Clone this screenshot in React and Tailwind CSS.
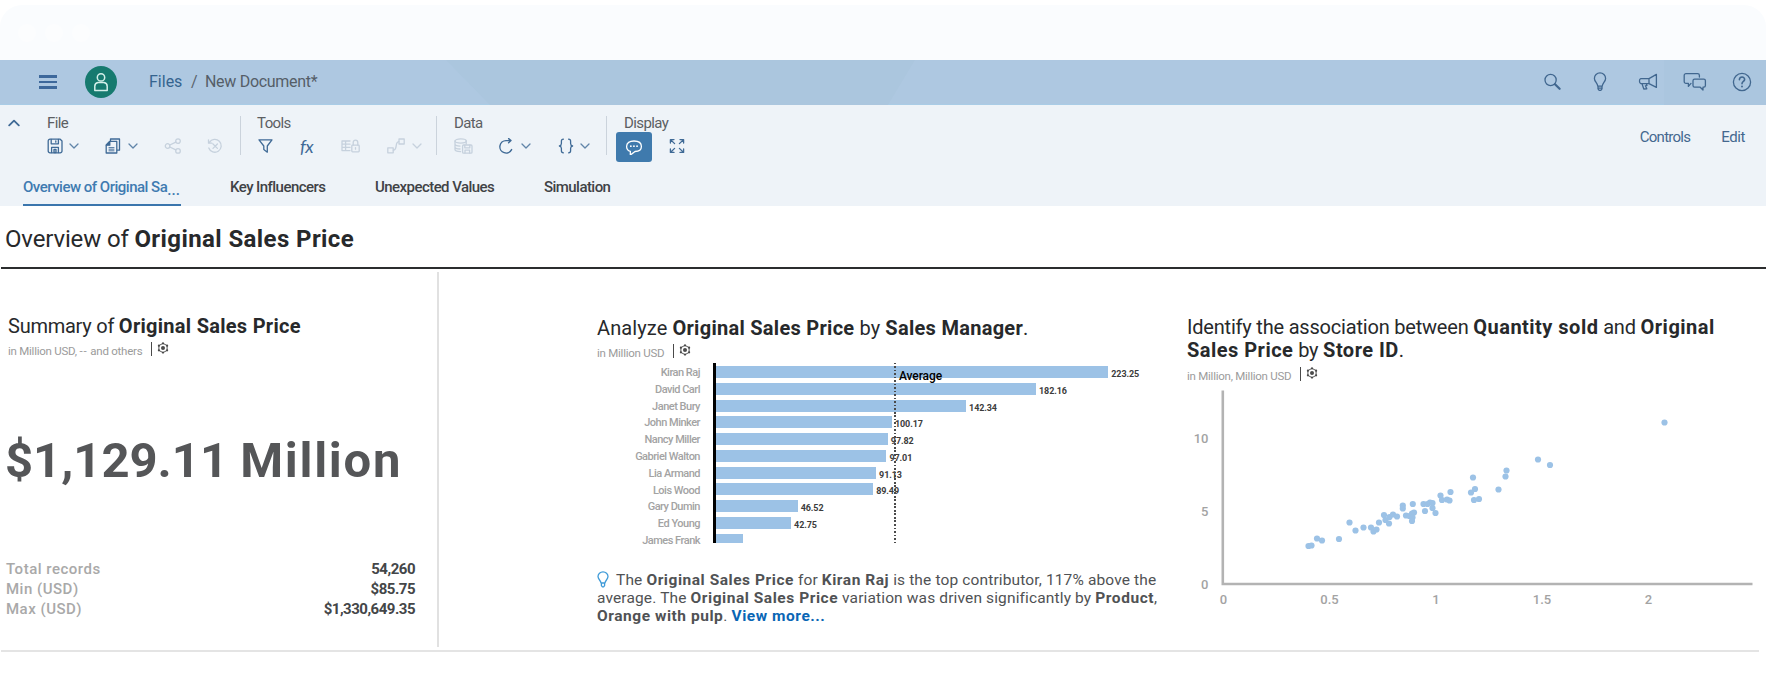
function Svg({ w = 16, h = 16, className = "", children }) {
  return (
    <svg
      width={w}
      height={h}
      viewBox={`0 0 ${w} ${h}`}
      fill="none"
      stroke="currentColor"
      strokeWidth="1.3"
      strokeLinecap="round"
      strokeLinejoin="round"
      className={`shrink-0 ${className}`}
    >
      {children}
    </svg>
  );
}

function Chevron({ className = "" }) {
  return (
    <Svg w={10} h={6} className={className}>
      <path d="M1 1l4 4 4-4" />
    </Svg>
  );
}

function SaveIcon() {
  return (
    <Svg>
      <path d="M3 1.2h10.2L15 3v10a1.8 1.8 0 0 1-1.8 1.8H3A1.8 1.8 0 0 1 1.2 13V3A1.8 1.8 0 0 1 3 1.2z" />
      <path d="M4.2 1.4v4.4h7.2V1.4M8.8 2.8v1.4M4.6 14.6V9.4h6.8v5.2M7 11.5v3h2v-3z" />
    </Svg>
  );
}

function CopyIcon() {
  return (
    <Svg className="ml-[26px]">
      <path d="M5.5 2.8V1h9v11.2h-2.2" />
      <path d="M4.6 3.4h7.2V15H1.2V7z" />
      <path d="M4.8 3.6v3.6H1.4z" fill="currentColor" />
      <path d="M4 9.6h5M4 11.2h5M4 12.8h5" strokeWidth="0.9" />
    </Svg>
  );
}

function ShareIcon() {
  return (
    <Svg w={18} className="ml-[26px]">
      <circle cx="3.6" cy="8" r="2.3" />
      <circle cx="14" cy="3.1" r="2.3" />
      <circle cx="14" cy="12.9" r="2.3" />
      <path d="M5.8 7l6-2.9M5.8 9l6 2.9" />
    </Svg>
  );
}

function ResetIcon() {
  return (
    <Svg className="ml-[25px]">
      <path d="M2.4 4.4A6.4 6.4 0 1 1 1.8 10M1.5 1.8v3.4h3.4M6 6l4.4 4.4M10.4 6L6 10.4" />
    </Svg>
  );
}

function FilterIcon() {
  return (
    <Svg w={15} className="ml-px">
      <path d="M1 1.8h13L9.3 8v6.2L5.8 11.6V8z" />
    </Svg>
  );
}

function LockedTableIcon() {
  return (
    <Svg w={19} className="ml-[26px]">
      <path d="M9 3H1v9.6h8M1 6.2h8M1 9.4h8M4.6 3v9.6" />
      <rect x="10.8" y="7.2" width="7.4" height="6.6" rx="0.8" />
      <path d="M12.2 7V4.4a2.3 2.3 0 0 1 4.6 0V7M14.5 9.6v1.6" />
    </Svg>
  );
}

function LinkedIcon() {
  return (
    <Svg w={18} className="ml-[27px]">
      <rect x="0.8" y="9.8" width="5.4" height="5" />
      <rect x="12" y="1" width="5.2" height="5" />
      <path d="M6.4 12.2c4.6-.4 1-8.2 5.4-8.6" />
    </Svg>
  );
}

function DataSaveIcon() {
  return (
    <Svg w={19}>
      <ellipse cx="6.6" cy="3" rx="5.6" ry="2.1" />
      <path d="M1 3v8.6c0 1 2 2 5.6 2.1M12.2 3v3M1 6c0 1.1 2 2 5 2.1M1 9c0 1 2 1.9 5 2" />
      <rect x="8.6" y="7" width="9.4" height="8.2" rx="1" />
      <path d="M10.8 7.2v2.6h5V7.2M11 15v-2.8h4.6V15" />
    </Svg>
  );
}

function RefreshIcon() {
  return (
    <Svg className="ml-[25px]">
      <path d="M13.6 11.6A6.2 6.2 0 1 1 8 2.6h4.4M10.6.6l2.4 2-2.4 2.2" strokeWidth="1.4" />
    </Svg>
  );
}

function BracesIcon() {
  return (
    <Svg className="ml-[27px]">
      <path d="M5.4 1.2c-1.800 0-2 .8-2 2v2.400c0 1.400-.6 2.200-2 2.400 1.400.2 2 1 2 2.400v2.400c0 1.200.2 2 2 2M10.600 1.200c1.800 0 2 .8 2 2v2.400c0 1.400.6 2.200 2 2.400-1.400.2-2 1-2 2.400v2.400c0 1.200-.2 2-2 2" />
    </Svg>
  );
}

function CommentIcon() {
  return (
    <Svg w={18}>
      <path d="M5.4 12.3C3 11.6 1.6 9.8 1.6 7.4 1.6 3.9 4.6 2 9 2s7.4 1.900 7.400 5.400c0 3.200-2.600 5-6.400 5.100L6 15.600c-.6.2-.8 0-.7-.6z" />
      <path d="M5.8 7.2h.1M8.9 7.2h.1M12 7.2h.1" strokeWidth="1.7" />
    </Svg>
  );
}

function ExpandIcon() {
  return (
    <Svg className="ml-[17px]">
      <path d="M1.400 5V1.600h3.600M1.600 1.800l4 3.800M11 1.600h3.600V5M14.400 1.800l-4 3.800M1.400 11v3.400h3.600M1.600 14.200l4-3.800M11 14.400h3.600V11M14.400 14.200l-4-3.800" />
    </Svg>
  );
}

function Toolbar() {
  return (
    <div className="flex h-[58px] text-[#3f6a96]">
      <div className="w-[47px] pt-[14px] pl-2">
        <Svg w={12} h={8}>
          <path d="M1.2 6.4L6 1.6l4.8 4.8" strokeWidth="1.8" />
        </Svg>
      </div>

      <ToolGroup label="File" className="w-[193px]">
        <SaveIcon />
        <Chevron className="ml-[6px] opacity-80" />
        <CopyIcon />
        <Chevron className="ml-[7px] opacity-80" />
        <div className="flex text-[#c6d1dd]">
          <ShareIcon />
          <ResetIcon />
        </div>
      </ToolGroup>
      <Divider />

      <ToolGroup label="Tools" className="ml-[16px] w-[179px]">
        <FilterIcon />
        <span className="ml-[27px] w-[15px] font-['Lato'] text-[18px] leading-4 tracking-[-0.6px] italic">
          fx
        </span>
        <div className="flex items-center text-[#c6d1dd]">
          <LockedTableIcon />
          <LinkedIcon />
          <Chevron className="ml-[7px]" />
        </div>
      </ToolGroup>
      <Divider />

      <ToolGroup label="Data" className="ml-[17px] w-[152px]">
        <div className="text-[#c6d1dd]">
          <DataSaveIcon />
        </div>
        <RefreshIcon />
        <Chevron className="ml-[7px] opacity-80" />
        <BracesIcon />
        <Chevron className="ml-[6px] opacity-80" />
      </ToolGroup>
      <Divider />

      <ToolGroup label="Display" className="ml-[9px]" labelClass="pl-2">
        <div className="mt-px flex h-[30px] w-[36px] items-center justify-center rounded-[3px] bg-[#3f7aad] text-white">
          <CommentIcon />
        </div>
        <ExpandIcon />
      </ToolGroup>

      <div className="ml-auto flex gap-[31px] pt-[22px] pr-[21px] text-[15px] leading-5 text-[#44688f]">
        <span className="tracking-[-0.75px]">Controls</span>
        <span className="tracking-[-0.4px]">Edit</span>
      </div>
    </div>
  );
}

function Divider() {
  return <div className="mt-[11px] h-[39px] w-px bg-[#cbd3dc]" />;
}

function ToolGroup({ label, className = "", labelClass = "", children }) {
  return (
    <div className={`pt-[7px] ${className}`}>
      <div
        className={`h-[18px] text-[15px] leading-[23px] tracking-[-0.6px] text-[#5c5f63] ${labelClass}`}
      >
        {label}
      </div>
      <div className="flex h-[32px] items-center">{children}</div>
    </div>
  );
}

function Header() {
  return (
    <div className="relative flex h-[45px] items-center border-b border-[#a9cce6] bg-[#aec8e1]">
      <svg className="absolute top-0 left-0" width="1766" height="45">
        <path d="M446 0H915L888 45H490z" fill="#abc6de" />
        <path d="M1664 0h102v45h-102z" fill="#abc6df" />
      </svg>
      <div className="relative flex w-full items-center text-[#41678f]">
        <div className="ml-[39px] flex w-[18px] flex-col gap-[3px]">
          <div className="h-[2.5px] bg-[#3d689b]" />
          <div className="h-[2.5px] bg-[#3d689b]" />
          <div className="h-[2.5px] bg-[#3d689b]" />
        </div>
        <div className="ml-[28px] flex size-8 items-center justify-center rounded-full bg-[#167a6f] text-[#d3efe9]">
          <Svg w={16} h={20}>
            <circle cx="8" cy="5.4" r="3.7" strokeWidth="1.5" />
            <path d="M1.8 18.4v-4.2c0-2 1.2-3.4 3.2-3.8h6c2 .4 3.2 1.8 3.2 3.8v4.2z" strokeWidth="1.5" />
          </Svg>
        </div>
        <div className="ml-[32px] flex text-[16px] leading-5">
          <span className="w-[42px] text-[#35648f]">Files</span>
          <span className="w-[14px] text-[#5b646d]">/</span>
          <span className="tracking-[-0.3px] text-[#555e68]">New Document*</span>
        </div>
        <div className="ml-auto flex pr-[14px]">
          <Svg w={18} h={20}>
            <circle cx="7.6" cy="8" r="5.6" />
            <path d="M12 12.2l4.6 4.6" strokeWidth="2.2" />
          </Svg>
          <Svg w={14} h={20} className="ml-[32px]">
            <path d="M4.8 14.2C4.6 11 1.4 9.600 1.4 6.400a5.600 5.600 0 0 1 11.200 0c0 3.200-3.200 4.600-3.400 7.800zM5 14.400v2.400l1.200 1.600h1.600L9 16.800v-2.400M5 16.200h4" />
          </Svg>
          <Svg w={20} h={20} className="ml-[31px]">
            <path d="M18.400 2.400v13L11 11.600H2.800C1 11.200 1 7 2.800 6.600H11zM11 6.800v4.800M4 11.800l1.800 5.200 3-.2-1.400-3 1.600-.4-.8-1.600" />
          </Svg>
          <Svg w={24} h={20} className="ml-[25px]">
            <path d="M8 11.400l-2.600 3v-3H3A1.800 1.800 0 0 1 1.200 9.600V3.400A1.800 1.800 0 0 1 3 1.600h11.600a1.800 1.800 0 0 1 1.800 1.800v1.600" />
            <path d="M11.600 7.200h9.200a1.600 1.600 0 0 1 1.600 1.600v4.800a1.600 1.600 0 0 1-1.600 1.600H20v2.800l-2.800-2.800h-5.600a1.600 1.600 0 0 1-1.600-1.600V8.800a1.600 1.600 0 0 1 1.600-1.600z" />
          </Svg>
          <Svg w={20} h={20} className="ml-[25px]">
            <circle cx="10" cy="10" r="8.600" />
            <path d="M7.400 7.800c0-3.800 5.400-3.400 5.200-.2-.1 1.900-2.600 1.900-2.600 4.200" strokeWidth="1.600" />
            <path d="M10 14.400v.2" strokeWidth="1.900" />
          </Svg>
        </div>
      </div>
    </div>
  );
}

function Tabs() {
  return (
    <div className="flex h-[43px] pl-[23px] text-[15px] leading-[20px] font-medium tracking-[-0.55px] text-[#3f4246]">
      <div className="mr-[49px] flex w-[158px] items-start border-b-2 border-[#3b76ad] pt-[14px] whitespace-nowrap text-[#3f7bb1]">
        <span className="tracking-[-0.5px]">Overview of Original Sa</span>
        <span className="pt-[3px] tracking-normal">...</span>
      </div>
      <div className="w-[145px] pt-[14px]">Key Influencers</div>
      <div className="w-[169px] pt-[14px]">Unexpected Values</div>
      <div className="pt-[14px]">Simulation</div>
    </div>
  );
}

// small unit line under every chart title
function Unit({ children, className = "" }) {
  return (
    <div className={`flex items-center text-[11.5px] tracking-[-0.25px] text-[#9b9b9b] ${className}`}>
      <span className="pt-[4px] leading-[14px]">{children}</span>
      <span className="ml-[9px] h-[14px] w-px bg-[#4a4a4a]" />
      <svg width="12" height="12" viewBox="0 0 12 12" className="-mt-[2px] ml-[5px]" fill="none" stroke="#555">
        <path d="M6 1.300l4.100 2.350v4.700L6 10.700 1.900 8.350v-4.700z" strokeWidth="1" />
        <g fill="#4a4a4a" stroke="none">
          <circle cx="6" cy="1.400" r="1.100" />
          <circle cx="10.100" cy="3.700" r="1.100" />
          <circle cx="10.100" cy="8.300" r="1.100" />
          <circle cx="6" cy="10.600" r="1.100" />
          <circle cx="1.900" cy="8.300" r="1.100" />
          <circle cx="1.900" cy="3.700" r="1.100" />
          <circle cx="6" cy="6" r="2" />
        </g>
      </svg>
    </div>
  );
}

const records = [
  ["Total records", "54,260"],
  ["Min (USD)", "$85.75"],
  ["Max (USD)", "$1,330,649.35"],
];

function Summary() {
  return (
    <div className="mt-[3px] h-[375px] w-[439px] border-r-2 border-[#e1e1e1] pt-[42px]">
      <h2 className="pl-[8px] text-[20px] leading-6 tracking-[-0.25px] text-[#27292b]">
        Summary of <b className="tracking-[0.28px]">Original Sales Price</b>
      </h2>
      <Unit className="mt-[2px] pl-[8px]">
        in Million USD, <span className="tracking-[1px]">--</span> and others
      </Unit>
      <div className="mt-[73px] pl-[5px] text-[49px] leading-[60px] font-bold whitespace-nowrap text-[#555658]">
        $1,129.11 <span className="tracking-[1.7px]">Million</span>
      </div>
      <div className="mt-[68px] pr-[22px] pl-[6px] text-[15px] leading-[20px]">
        {records.map(([label, value]) => (
          <div key={label} className="flex justify-between">
            <span className="font-medium tracking-[0.5px] text-[#a9a9a9]">{label}</span>
            <span className="font-bold tracking-[-0.5px] text-[#444648]">{value}</span>
          </div>
        ))}
      </div>
    </div>
  );
}

const managers = [
  { name: "Kiran Raj", value: 223.25 },
  { name: "David Carl", value: 182.16 },
  { name: "Janet Bury", value: 142.34 },
  { name: "John Minker", value: 100.17 },
  { name: "Nancy Miller", value: 97.82 },
  { name: "Gabriel Walton", value: 97.01 },
  { name: "Lia Armand", value: 91.13 },
  { name: "Lois Wood", value: 89.49 },
  { name: "Gary Dumin", value: 46.52 },
  { name: "Ed Young", value: 42.75 },
  { name: "James Frank", value: 15.6, cut: true },
];

function BarChart() {
  return (
    <div className="relative mt-[3px] flex h-[180px]">
      <div className="flex w-[103px] flex-col pt-[1px] text-right text-[11px] font-medium tracking-[-0.5px] text-[#a3a3a3]">
        {managers.map((m) => (
          <div key={m.name} className="h-[16.8px] shrink-0 leading-[17px]">
            {m.name}
          </div>
        ))}
      </div>
      <div className="ml-[13px] w-[3px] bg-black" />
      <div className="flex flex-col pt-[3px]">
        {managers.map((m) => (
          <div key={m.name} className="flex h-[16.77px] shrink-0 items-start">
            <div
              className={m.cut ? "h-[9px] bg-[#9cc2e6]" : "h-[12px] bg-[#9cc2e6]"}
              style={{ width: m.value * 1.757 }}
            />
            {!m.cut && (
              <span className="pt-[2px] pl-[3px] text-[9px] leading-[12px] font-bold tracking-[-0.1px] text-[#3c3c3c]">
                {m.value}
              </span>
            )}
          </div>
        ))}
      </div>
      <div className="absolute top-0 left-[297px] h-full w-[1.5px] bg-[repeating-linear-gradient(to_bottom,#4a4a4a_0_1.5px,transparent_1.5px_3.5px)]" />
      <div className="absolute top-[5px] left-[302px] text-[12px] leading-4 font-medium tracking-[-0.1px] text-black">
        Average
      </div>
    </div>
  );
}

function Analyze() {
  return (
    <div className="ml-[158px] w-[590px] pt-[46px]">
      <h2 className="pt-px text-[20px] leading-6 tracking-[0.1px] text-[#27292b]">
        Analyze <b className="tracking-[0.28px]">Original Sales Price</b> by{" "}
        <b className="tracking-[0.28px]">Sales Manager</b>.
      </h2>
      <Unit className="mt-[2px]">in Million USD</Unit>
      <BarChart />
      <div className="mt-[28px] text-[15.5px] leading-[18px] tracking-[0.14px] whitespace-nowrap text-[#505254] [&_b]:tracking-[0.54px]">
        <div className="flex">
          <Svg w={12} h={17} className="mr-[7px] text-[#3f9bd8]">
            <path d="M4 12C3.800 9.400 1 8.400 1 5.600a5 4.800 0 0 1 10 0C11 8.400 8.200 9.400 8 12zM4.400 12v2.600l1 1.200h1.200l1-1.200V12" />
          </Svg>
          <span>
            The <b>Original Sales Price</b> for <b>Kiran Raj</b> is the top contributor, 117% above the
          </span>
        </div>
        <div>
          average. The <b>Original Sales Price</b> variation was driven significantly by <b>Product</b>,
        </div>
        <div>
          <b>Orange with pulp</b>. <b className="text-[#0a66b5]">View more...</b>
        </div>
      </div>
    </div>
  );
}

const points = [
  [18.5, 96], [21.5, 95.5], [27, 88.5], [32, 90.5], [49, 89], [59.5, 72.5],
  [65.5, 80.5], [73.5, 77.5], [81, 77.5], [83.5, 81.5], [86.5, 79.5], [89, 72.5],
  [94, 65], [95.5, 70], [99, 73.5], [99.5, 67], [103, 64.5], [107, 66.5],
  [112.8, 55.5], [112.8, 58.5], [116, 65.5], [119.5, 66], [122.8, 54], [122, 63.5],
  [124, 62.5], [122.5, 67.5], [122, 71], [133.5, 54], [135, 61], [137.5, 54],
  [140, 52.5], [142.5, 53], [142.5, 58], [145.5, 63], [150.5, 45.5], [152, 50],
  [157, 49.5], [159.5, 50.5], [160.5, 42], [181, 42.5], [185, 39], [183, 27.5],
  [184, 50], [189, 49], [208.5, 39.5], [215.5, 26.5], [216.5, 20.5],
  [248, 9.5], [260, 15], [374.5, -27.5],
];

function Scatter() {
  return (
    <svg width="579" height="228" className="mt-[2px]">
      <path d="M35.8 5.5v193.5M34.5 199h531" stroke="#b3b3b3" strokeWidth="2.6" fill="none" />
      <g fill="#a3a3a3" fontSize="13" fontWeight="500" textAnchor="end">
        <text x="21.5" y="57.5">10</text>
        <text x="21.5" y="130.5">5</text>
        <text x="21.5" y="204">0</text>
      </g>
      <g fill="#a3a3a3" fontSize="13" fontWeight="500" textAnchor="middle">
        <text x="36.5" y="219">0</text>
        <text x="142.5" y="219">0.5</text>
        <text x="249" y="219">1</text>
        <text x="355" y="219">1.5</text>
        <text x="461.5" y="219">2</text>
      </g>
      <g fill="#9cc2e6">
        {points.map(([x, y], i) => (
          <circle key={i} cx={x + 103} cy={y + 65} r="3.1" />
        ))}
      </g>
    </svg>
  );
}

function Association() {
  return (
    <div className="w-[579px] pt-[47px]">
      <h2 className="text-[20px] leading-[23px] tracking-[-0.2px] whitespace-nowrap text-[#27292b] [&_b]:tracking-[0.48px]">
        Identify the association between <b>Quantity sold</b> and <b>Original</b>
        <br />
        <b>Sales Price</b> by <b>Store ID</b>.
      </h2>
      <Unit className="mt-[3px]">in Million, Million USD</Unit>
      <Scatter />
    </div>
  );
}

export default function App() {
  return (
    <div className="h-[680px] w-[1766px] overflow-hidden bg-white pt-[5px] font-['Roboto','Liberation_Sans',sans-serif]">
      <div className="flex h-[55px] items-center gap-[9px] rounded-t-[22px] bg-[#fafcfe] pl-[18px]">
        <span className="size-[18px] rounded-full bg-[#fcfdfe]" />
        <span className="size-[18px] rounded-full bg-[#fcfdfe]" />
        <span className="size-[18px] rounded-full bg-[#fcfdfe]" />
      </div>
      <Header />
      <div className="bg-[#eef3f8]">
        <Toolbar />
        <Tabs />
      </div>
      <h1 className="ml-px h-[63px] border-b-2 border-[#2b2d2e] pt-[18px] pl-[4px] text-[24px] leading-[30px] tracking-[-0.15px] text-[#27292b]">
        Overview of <b className="tracking-[0.4px]">Original Sales Price</b>
      </h1>
      <div className="mr-[7px] ml-px flex h-[383px] border-b-2 border-[#e4e4e4]">
        <div className="-ml-px flex">
          <Summary />
          <Analyze />
          <Association />
        </div>
      </div>
    </div>
  );
}
